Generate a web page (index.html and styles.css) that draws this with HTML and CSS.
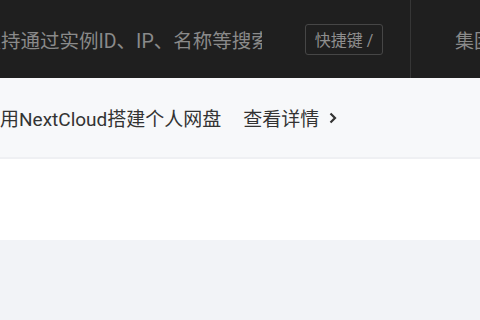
FILE: index.html
```html
<!DOCTYPE html>
<html lang="zh-CN">
<head>
    <meta charset="UTF-8">
    <meta name="viewport" content="width=device-width, initial-scale=1.0">
    <title>控制台</title>
    <link rel="stylesheet" href="styles.css">
</head>
<body>
    <div class="topbar">
        <div class="search">
            <span class="search-placeholder">支持通过实例ID、IP、名称等搜索</span>
        </div>
        <div class="hotkey">快捷键 /</div>
        <div class="divider"></div>
        <div class="nav-item">集团账号</div>
    </div>

    <div class="notice">
        <span class="notice-text">使用NextCloud搭建个人网盘</span>
        <a class="notice-link" href="#">查看详情
            <svg class="chevron" width="10" height="12" viewBox="0 0 10 12">
                <path d="M2.5 1.5 L7 6 L2.5 10.5" fill="none" stroke="currentColor" stroke-width="2.2"/>
            </svg>
        </a>
    </div>

    <div class="panel"></div>
</body>
</html>
```

FILE: styles.css
```css
* {
    margin: 0;
    padding: 0;
    box-sizing: border-box;
}

body {
    font-family: Roboto, "Noto Sans CJK SC", sans-serif;
    background: #f2f3f7;
    width: 480px;
    height: 320px;
    overflow: hidden;
}

.topbar {
    height: 78px;
    background: #1f1f1f;
    display: flex;
    align-items: center;
    white-space: nowrap;
}

.search {
    width: 262px;
    overflow: hidden;
    flex-shrink: 0;
}

.search-placeholder {
    display: block;
    margin-left: -18.5px;
    font-size: 19.5px;
    color: #8a8a8a;
}

.hotkey {
    margin-left: 43px;
    width: 78px;
    height: 31px;
    border: 1px solid #464646;
    border-radius: 3px;
    font-size: 16px;
    color: #8e8e8e;
    display: flex;
    align-items: center;
    justify-content: center;
    flex-shrink: 0;
}

.divider {
    margin-left: 27px;
    width: 1px;
    height: 78px;
    background: #363636;
    flex-shrink: 0;
}

.nav-item {
    margin-left: 44px;
    font-size: 19px;
    color: #8a8a8a;
}

.notice {
    height: 81px;
    background: #f7f8fa;
    border-bottom: 2px solid #eff0f3;
    display: flex;
    align-items: center;
    white-space: nowrap;
    overflow: hidden;
}

.notice-text {
    margin-left: -19px;
    font-size: 19px;
    color: #333333;
}

.notice-link {
    margin-left: 22px;
    font-size: 19px;
    color: #333333;
    text-decoration: none;
    display: flex;
    align-items: center;
    gap: 9px;
}

.panel {
    height: 81px;
    background: #ffffff;
}
```
